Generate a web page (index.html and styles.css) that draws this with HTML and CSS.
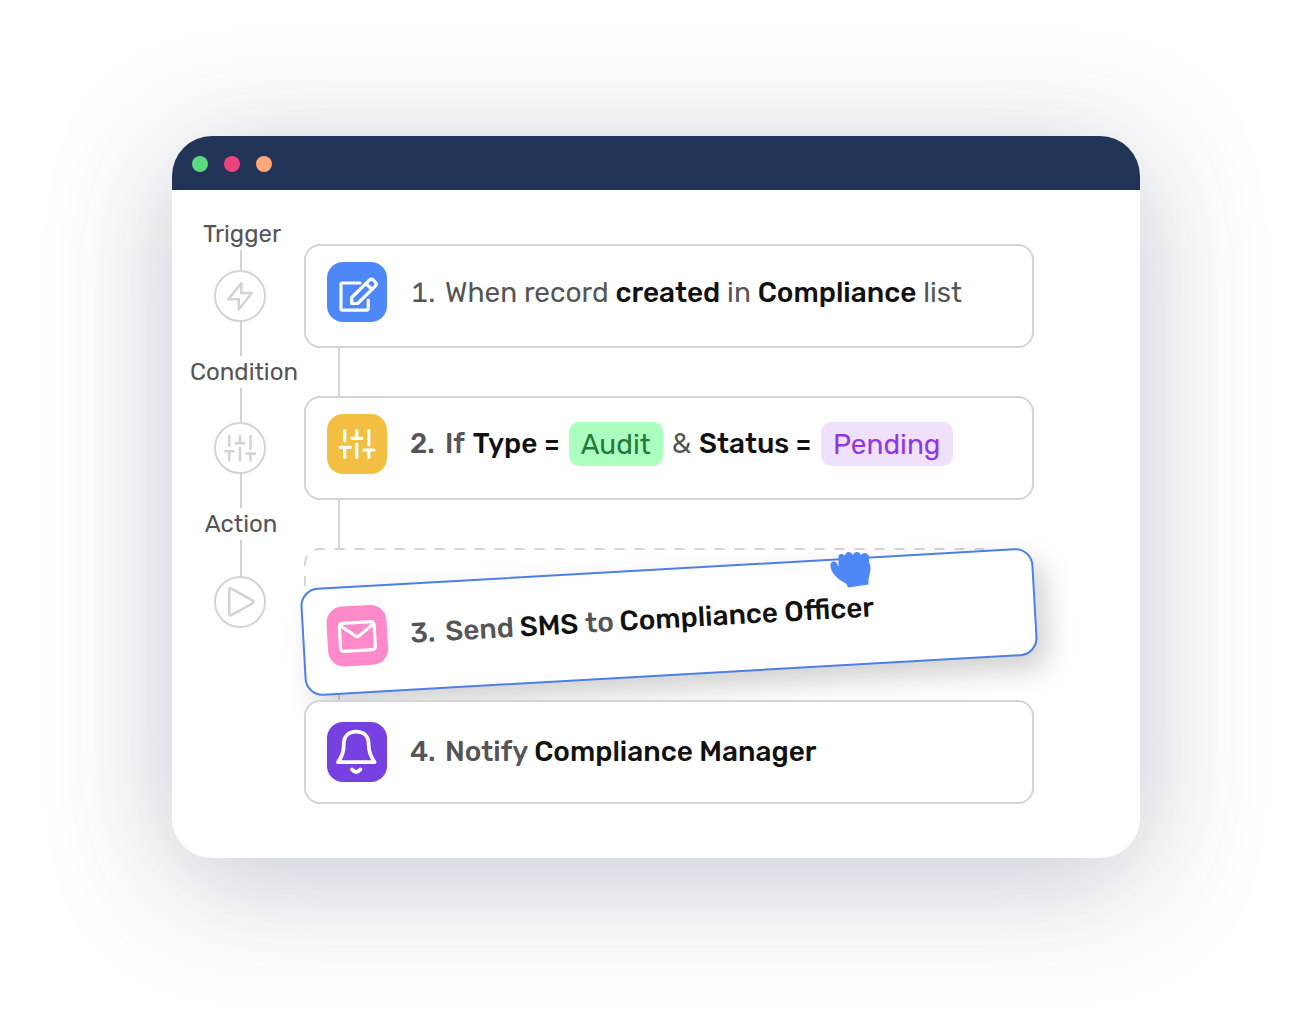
FILE: index.html
```
<!DOCTYPE html>
<html lang="en">
<head>
    <meta charset="utf-8">
    <title>Workflow</title>
    <link rel="stylesheet" href="styles.css">
</head>
<body>
<div class="window">
    <div class="titlebar">
        <span class="dot green"></span>
        <span class="dot red"></span>
        <span class="dot orange"></span>
    </div>
    <div class="content">
        <div class="rail">
            <div class="rail-label trigger">Trigger</div>
            <div class="line first"></div>
            <div class="circle">
                <svg width="48" height="48" viewBox="-24 -24 48 48"><path d="M1.3-12.8L-11.8 3.2H-1.2V13.2L11.8-3H1.2Z"/></svg>
            </div>
            <div class="line"></div>
            <div class="rail-label condition">Condition</div>
            <div class="line"></div>
            <div class="circle">
                <svg width="48" height="48" viewBox="-24 -24 48 48"><path d="M-10.7-12V-2M-14.7 3.3H-6.5M-10.7 3.3V12.5M0-12V-5M-4.5-4.7H4.5M0 0V12.5M10.5-12V1M6.5 5.6H15M10.5 5.6V12.5"/></svg>
            </div>
            <div class="line"></div>
            <div class="rail-label">Action</div>
            <div class="line last"></div>
            <div class="circle">
                <svg width="48" height="48" viewBox="-24 -24 48 48"><path d="M-10.7-12.2Q-10.7-14.4-8.7-13.4L12.6-1.5Q14.6 0 12.6 1.3L-8.7 13.2Q-10.7 14.2-10.7 12Z"/></svg>
            </div>
        </div>

        <div class="steps">
            <div class="card">
                <div class="tile blue">
                    <svg width="60" height="60" viewBox="0 0 60 60"><path d="M33 21H15.5Q14 21 14 22.5V46.5Q14 48.2 15.5 48.2H39.5Q41.2 48.2 41.2 46.5V38"/><path d="M24.7 41.5V35.5L42.3 18.2Q44.3 16.3 46.3 18.2L48.3 20.2Q50.2 22.2 48.3 24.2L30.7 41.5ZM39 21.5L45 27.5"/></svg>
                </div>
                <div class="text first-text"><span class="num">1.</span>When record <b>created</b> in <b>Compliance</b> list</div>
            </div>
            <div class="join"></div>
            <div class="card">
                <div class="tile yellow">
                    <svg width="60" height="60" viewBox="0 0 60 60"><path d="M17.7 16.5V27M13.3 33.3H23.3M17.7 33.3V43.5M29.8 16.5V24M24.8 24.3H35M29.8 30V43.5M41.8 16.5V31M37 36H47M41.8 36V43.5"/></svg>
                </div>
                <div class="text"><b class="num">2.</b><b class="gray if">If</b> <b>Type =</b><span class="tag audit">Audit</span><span class="amp">&amp;</span><b>Status =</b><span class="tag pending">Pending</span></div>
            </div>
            <div class="join"></div>
            <div class="slot">
                <svg class="dashes" width="730" height="104"><path d="M1 40V16A15 15 0 0 1 16 1H690"/></svg>
                <div class="card dragged">
                    <div class="tile pink">
                        <svg width="60" height="60" viewBox="0 0 60 60"><rect x="12.6" y="16.8" width="34.8" height="28" rx="3"/><path d="M13.3 19L28.2 30.2Q30 31.5 31.8 30.2L46.7 19"/></svg>
                    </div>
                    <div class="text"><b class="num">3.</b><b class="gray">Send</b> <b>SMS</b> <b class="gray">to</b> <b>Compliance Officer</b></div>
                </div>
                <svg class="hand" width="44" height="38" viewBox="0 0 44 38"><path d="M18 36.5L16.500 33Q7 28 3 22Q0 17 .5 13Q1 10.500 4 10.500Q7 10.500 7.500 14L8.500 16V6Q8.500 3 11.500 3Q13.500 3 15 4.500Q15.500 1 18.800 1Q21.500 1 23 4Q24 1 27 1Q30 1 30.800 4Q32 2 35 2Q38.500 2.500 39 5.500V11Q41.500 16 40 22L38.500 28V33.500Z"/></svg>
            </div>
            <div class="join"></div>
            <div class="card last-card">
                <div class="tile purple">
                    <svg width="60" height="60" viewBox="0 0 60 60"><path d="M11 40.200C15 34 16.800 30 16.800 22C16.800 14 22 9.600 29.200 9.600C36.500 9.600 41.600 14 41.600 22C41.600 30 44 34 47.500 40.200Z"/><path d="M25 47.500Q29.200 52.500 33.400 47.500"/></svg>
                </div>
                <div class="text"><b class="num">4.</b><b class="gray">Notify</b> <b>Compliance Manager</b></div>
            </div>
        </div>
    </div>
</div>
</body>
</html>
```
FILE: styles.css
```
* {
    box-sizing: border-box;
}

body {
    margin: 0;
    height: 1026px;
    padding: 136px 0 0 172px;
    overflow: hidden;
    background: #fff;
    font-family: Rubik, Roboto, sans-serif;
    color: #555;
}

.window {
    width: 968px;
    height: 722px;
    border-radius: 40px;
    background: #fff;
    overflow: hidden;
    box-shadow: 0 20px 124px rgba(30, 53, 88, 0.28);
}

.titlebar {
    display: flex;
    align-items: center;
    gap: 16px;
    height: 54px;
    padding: 2px 0 0 20px;
    background: #213356;
}

.dot {
    width: 16px;
    height: 16px;
    border-radius: 50%;
}

.green { background: #5bd97f; }
.red { background: #ed427c; }
.orange { background: #ffa776; }

.content {
    display: flex;
    padding: 28px 0 0 18px;
}

/* left rail */
.rail {
    display: flex;
    flex-direction: column;
    align-items: center;
    width: 102px;
}

.rail-label {
    height: 32px;
    line-height: 32px;
    font-size: 24px;
    white-space: nowrap;
}

.trigger { padding-left: 2px; }
.condition { padding-left: 6px; }

.line {
    width: 2px;
    height: 34px;
    background: #d4d4d4;
}

.line.first { height: 20px; }
.line.last { height: 36px; }

.circle {
    width: 52px;
    height: 52px;
    margin-right: 2px;
    border: 2px solid #d4d4d4;
    border-radius: 50%;
}

svg {
    display: block;
    fill: none;
    stroke-linecap: round;
    stroke-linejoin: round;
}

.circle svg {
    stroke: #d4d4d4;
    stroke-width: 2.6;
}

/* steps */
.steps {
    width: 730px;
    margin: 26px 0 0 12px;
}

.card {
    display: flex;
    height: 104px;
    padding: 16px 0 0 21px;
    border: 2px solid #d4d4d4;
    border-radius: 16px;
    background: #fff;
}

.join {
    width: 2px;
    height: 48px;
    margin-left: 34px;
    background: #d4d4d4;
}

.tile {
    flex: none;
    width: 60px;
    height: 60px;
    border-radius: 16px;
}

.tile svg {
    stroke: #fff;
    stroke-width: 3.2;
}

.blue { background: #4e87f8; }
.yellow { background: #f2bf43; }
.pink { background: #ff89c9; }
.purple { background: #7741e2; }
.purple svg { stroke-width: 3.8; }

.text {
    height: 60px;
    padding-left: 23px;
    line-height: 60px;
    font-size: 28px;
    white-space: nowrap;
}

.text b {
    font-weight: 500;
    color: #111;
}

.num {
    display: inline-block;
    width: 35px;
}

.first-text {
    padding-left: 24px;
    line-height: 62px;
}

.first-text .num {
    width: 34px;
    font-variant-numeric: tabular-nums;
}

.text b.num,
.text b.gray {
    color: #555;
}

.gray { margin-right: -1px; }
.gray.if { margin-right: 1px; }

.tag {
    display: inline-block;
    position: relative;
    top: 1px;
    height: 44px;
    padding: 0 12px;
    border-radius: 10px;
    line-height: 46px;
}

.audit {
    margin: 0 9px;
    background: #abffbf;
    color: #227a3b;
}

.amp { margin-right: 8px; }

.pending {
    margin-left: 9px;
    padding: 0 12.5px;
    background: #efe1fd;
    color: #9137e2;
}

.slot {
    position: relative;
    height: 104px;
}

.dashes {
    position: absolute;
    stroke: #d4d4d4;
    stroke-width: 2;
    stroke-linecap: butt;
    stroke-dasharray: 10 10;
    stroke-dashoffset: -2;
}

/* border sits outside the slot while the card is dragged */
.dragged {
    position: relative;
    width: 734px;
    height: 108px;
    margin: 0 -2px;
    padding: 18px 0 0 23px;
    border-color: #4c80e4;
    border-radius: 18px;
    transform: translateY(20px) rotate(-3.25deg);
    box-shadow: 10px 14px 28px rgba(0, 0, 0, 0.18);
}

.dragged .text {
    line-height: 61px;
}

.hand {
    position: absolute;
    left: 526px;
    top: 3px;
    fill: #4e87f8;
}

.last-card {
    position: relative;
    padding-top: 20px;
}
```
